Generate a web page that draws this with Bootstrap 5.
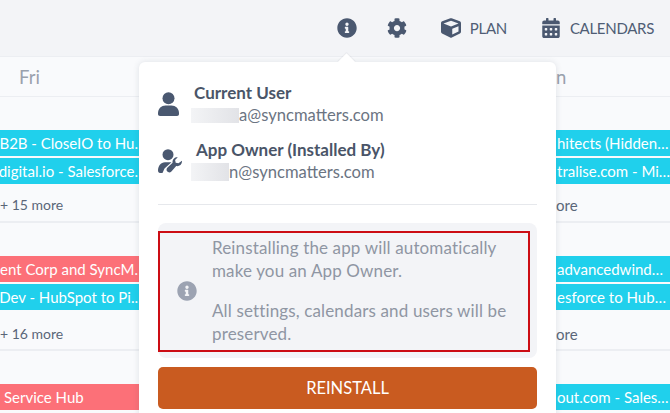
<!DOCTYPE html>
<html lang="en">
<head>
    <meta charset="UTF-8">
    <meta name="viewport" content="width=device-width, initial-scale=1.0">
    <title>Calendar</title>
    <link href="https://cdn.jsdelivr.net/npm/bootstrap@5.3.0/dist/css/bootstrap.min.css" rel="stylesheet">
    <style>
        html, body {
            height: 100%;
            overflow: hidden;
        }
        body {
            font-family: Lato, "Open Sans", sans-serif;
            background: #f9fafc;
            color: #4a5568;
            position: relative;
        }
        .top-bar {
            height: 57px;
            background: #f3f4f7;
            padding-right: 16px;
            border-bottom: 1px solid #eceef2;
        }
        .top-bar svg {
            fill: #4a5870;
            display: block;
        }
        .top-label {
            font-size: 15px;
            color: #4f5d75;
            letter-spacing: -.3px;
        }
        .cal-grid {
            display: grid;
            grid-template-columns: 139px 1fr 114px;
        }
        .head-cell {
            height: 40px;
            font-size: 18.5px;
            color: #99a1ad;
            border-bottom: 1px solid #eceef2;
            line-height: 40px;
        }
        .fri-cell {
            padding-left: 19px;
        }
        .week-cell {
            border-bottom: 2px solid #eceef2;
            overflow: hidden;
        }
        .week-a { height: 126px; padding-top: 33px; }
        .week-b { height: 128px; padding-top: 33px; }
        .week-c { height: 62px; padding-top: 33px; border-bottom: 0; }
        .cal-bar {
            height: 26px;
            margin-bottom: 2px;
            color: #fff;
            font-size: 15px;
            line-height: 26px;
            white-space: nowrap;
            overflow: hidden;
            display: flex;
            justify-content: flex-end;
            padding-right: 1px;
        }
        .bar-cyan { background: #20d0ec; }
        .bar-red { background: #fc7078; }
        .bar-left {
            justify-content: flex-start;
            padding-left: 1px;
        }
        .more-line {
            font-size: 15px;
            color: #5a6678;
            white-space: nowrap;
            line-height: 20px;
            margin-top: 11px;
        }
        .more-low {
            margin-top: 14px;
        }
        .more-small {
            font-size: 14px;
        }
        .info-pop {
            position: absolute;
            left: 139px;
            top: 62px;
            width: 417px;
            height: 370px;
            background: #fff;
            border-radius: 6px;
            box-shadow: 0 0 6px rgba(60, 70, 90, .14);
            padding: 19px;
        }
        .info-pop::before {
            content: "";
            position: absolute;
            left: 201px;
            top: -6px;
            width: 13px;
            height: 13px;
            background: #fff;
            transform: rotate(45deg);
            box-shadow: -1px -1px 1px rgba(60, 70, 90, .06);
        }
        .pop-head {
            font-size: 17px;
            font-weight: 700;
            color: #4a5568;
            line-height: 23px;
        }
        .pop-mail {
            font-size: 16.6px;
            color: #6b7482;
            line-height: 23px;
            display: flex;
        }
        .blur-patch {
            display: block;
            height: 15px;
            margin-top: 4px;
            background: linear-gradient(90deg, #f3f4f6, #e2e3e7);
        }
        .patch-one {
            width: 48px;
            margin-left: -3px;
        }
        .patch-two {
            width: 38px;
            height: 18px;
            margin-top: 2px;
            margin-left: -5px;
        }
        .pop-rule {
            border-top: 1px solid #e6e8ec;
            margin: 20px 0 18px;
        }
        .notice-box {
            background: #f3f4f7;
            border-radius: 8px;
            height: 135px;
            padding: 13px 19px;
            color: #8f96a3;
            font-size: 17px;
            line-height: 23px;
            letter-spacing: .14px;
        }
        .notice-box p {
            margin: 0 0 17px;
        }
        .red-outline {
            position: absolute;
            left: 19px;
            top: 169px;
            width: 372px;
            height: 121px;
            border: 2px solid #cc0d14;
        }
        .reinstall-btn {
            background: #c95b20;
            border: 0;
            border-radius: 5px;
            color: #fff;
            width: 100%;
            height: 42px;
            font-size: 16.5px;
            margin-top: 9px;
        }
        .reinstall-btn:hover {
            background: #b54f1a;
            color: #fff;
        }
        .gap-info { margin-right: 30px; }
        .gap-gear { margin-right: 34px; }
        .gap-icon { margin-right: 9px; }
        .gap-cal { margin-right: 10px; }
        .gap-plan { margin-right: 35px; }
        .gap-user { margin-right: 15px; }
        .gap-owner { margin-right: 14px; }
        .gap-notice { margin-right: 15px; }
        .owner-row { margin-top: 11px; }
    </style>
</head>
<body>
    <!-- Верхняя панель -->
    <div class="top-bar d-flex align-items-center justify-content-end">
        <svg class="gap-info" width="20" height="20" viewBox="0 0 512 512"><path d="M256 8C119.043 8 8 119.083 8 256c0 136.997 111.043 248 248 248s248-111.003 248-248C504 119.083 392.957 8 256 8zm0 110c23.196 0 42 18.804 42 42s-18.804 42-42 42-42-18.804-42-42 18.804-42 42-42zm56 254c0 6.627-5.373 12-12 12h-88c-6.627 0-12-5.373-12-12v-24c0-6.627 5.373-12 12-12h12v-64h-12c-6.627 0-12-5.373-12-12v-24c0-6.627 5.373-12 12-12h64c6.627 0 12 5.373 12 12v100h12c6.627 0 12 5.373 12 12v24z"/></svg>
        <svg class="gap-gear" width="20" height="20" viewBox="0 0 512 512"><path d="M487.4 315.7l-42.6-24.6c4.3-23.2 4.3-47 0-70.2l42.6-24.6c4.9-2.8 7.1-8.6 5.5-14-11.1-35.6-30-67.8-54.7-94.6-3.8-4.1-10-5.1-14.8-2.3L380.8 110c-17.9-15.4-38.5-27.3-60.8-35.1V25.8c0-5.6-3.9-10.5-9.4-11.7-36.7-8.2-74.3-7.8-109.2 0-5.5 1.2-9.4 6.1-9.4 11.7V75c-22.2 7.9-42.8 19.8-60.8 35.1L88.7 85.5c-4.9-2.8-11-1.9-14.8 2.3-24.7 26.7-43.6 58.9-54.7 94.6-1.7 5.4.6 11.2 5.5 14L67.3 221c-4.3 23.2-4.3 47 0 70.2l-42.6 24.6c-4.9 2.8-7.1 8.6-5.5 14 11.1 35.6 30 67.8 54.7 94.6 3.8 4.1 10 5.1 14.8 2.3l42.6-24.6c17.9 15.4 38.5 27.3 60.8 35.1v49.2c0 5.6 3.9 10.5 9.4 11.7 36.7 8.2 74.3 7.8 109.2 0 5.5-1.2 9.4-6.1 9.4-11.7v-49.2c22.2-7.9 42.8-19.8 60.8-35.1l42.6 24.6c4.9 2.8 11 1.9 14.8-2.3 24.7-26.7 43.6-58.9 54.7-94.6 1.5-5.5-.7-11.3-5.6-14.1zM256 336c-44.1 0-80-35.9-80-80s35.9-80 80-80 80 35.9 80 80-35.9 80-80 80z"/></svg>
        <svg class="gap-icon" width="20" height="20" viewBox="0 0 512 512"><path d="M239.1 6.3l-208 78c-18.7 7-31.1 25-31.1 45v225.1c0 18.2 10.3 34.8 26.5 42.9l208 104c13.5 6.8 29.4 6.8 42.9 0l208-104c16.3-8.1 26.5-24.8 26.5-42.9V129.3c0-20-12.4-37.9-31.1-44.9l-208-78C262 2.2 250 2.2 239.1 6.3zM256 68.4l192 72v1.1l-192 78-192-78v-1.1l192-72zm32 356V275.5l160-65v133.9l-160 80z"/></svg>
        <span class="top-label gap-plan">PLAN</span>
        <svg class="gap-cal" width="18" height="20" viewBox="0 0 448 512"><path d="M0 464c0 26.5 21.5 48 48 48h352c26.5 0 48-21.5 48-48V192H0v272zm320-196c0-6.6 5.4-12 12-12h40c6.6 0 12 5.4 12 12v40c0 6.6-5.4 12-12 12h-40c-6.6 0-12-5.4-12-12v-40zm0 128c0-6.6 5.4-12 12-12h40c6.6 0 12 5.4 12 12v40c0 6.6-5.4 12-12 12h-40c-6.6 0-12-5.4-12-12v-40zM192 268c0-6.6 5.4-12 12-12h40c6.6 0 12 5.4 12 12v40c0 6.6-5.4 12-12 12h-40c-6.6 0-12-5.4-12-12v-40zm0 128c0-6.6 5.4-12 12-12h40c6.6 0 12 5.4 12 12v40c0 6.6-5.4 12-12 12h-40c-6.6 0-12-5.4-12-12v-40zM64 268c0-6.6 5.4-12 12-12h40c6.6 0 12 5.4 12 12v40c0 6.6-5.4 12-12 12H76c-6.6 0-12-5.4-12-12v-40zm0 128c0-6.6 5.4-12 12-12h40c6.6 0 12 5.4 12 12v40c0 6.6-5.4 12-12 12H76c-6.6 0-12-5.4-12-12v-40zM400 64h-48V16c0-8.8-7.2-16-16-16h-32c-8.8 0-16 7.2-16 16v48H160V16c0-8.8-7.2-16-16-16h-32c-8.8 0-16 7.2-16 16v48H48C21.5 64 0 85.5 0 112v48h448v-48c0-26.5-21.5-48-48-48z"/></svg>
        <span class="top-label">CALENDARS</span>
    </div>

    <!-- Календарь -->
    <div class="cal-grid">
        <div class="head-cell fri-cell">Fri</div>
        <div class="head-cell"></div>
        <div class="head-cell">n</div>

        <div class="week-cell week-a">
            <div class="cal-bar bar-cyan">B2B - CloseIO to Hu.</div>
            <div class="cal-bar bar-cyan">digital.io - Salesforce.</div>
            <div class="more-line more-small">+ 15 more</div>
        </div>
        <div class="week-cell week-a"></div>
        <div class="week-cell week-a">
            <div class="cal-bar bar-cyan bar-left">hitects (Hidden…</div>
            <div class="cal-bar bar-cyan bar-left">tralise.com - Mi…</div>
            <div class="more-line">ore</div>
        </div>

        <div class="week-cell week-b">
            <div class="cal-bar bar-red">ent Corp and SyncM.</div>
            <div class="cal-bar bar-cyan">Dev - HubSpot to Pi..</div>
            <div class="more-line more-low more-small">+ 16 more</div>
        </div>
        <div class="week-cell week-b"></div>
        <div class="week-cell week-b">
            <div class="cal-bar bar-cyan bar-left">advancedwind…</div>
            <div class="cal-bar bar-cyan bar-left">esforce to Hub…</div>
            <div class="more-line more-low">ore</div>
        </div>

        <div class="week-cell week-c">
            <div class="cal-bar bar-red bar-left ps-1">Service Hub</div>
        </div>
        <div class="week-cell week-c"></div>
        <div class="week-cell week-c">
            <div class="cal-bar bar-cyan bar-left">out.com - Sales…</div>
        </div>
    </div>

    <!-- Всплывающее окно -->
    <div class="info-pop">
        <div class="d-flex align-items-center">
            <svg class="gap-user" width="21" height="24" viewBox="0 0 21 24" fill="#4a5870">
                <circle cx="10.5" cy="6.2" r="6"/>
                <path d="M0 22v-1c0-4.5 3.5-7.5 7.500-7.500h6c4 0 7.500 3 7.500 7.500v1c0 1.200-.8 2-2 2H2c-1.200 0-2-.8-2-2z"/>
            </svg>
            <div>
                <div class="pop-head">Current User</div>
                <div class="pop-mail"><span class="blur-patch patch-one"></span>a@syncmatters.com</div>
            </div>
        </div>
        <div class="d-flex align-items-center owner-row">
            <svg class="gap-owner" width="24" height="24" viewBox="0 0 24 24" fill="#4a5870">
                <circle cx="10" cy="5.700" r="5.500"/>
                <path d="M0 21.500c0-4.500 2.700-8 7-8.300h6.500L6.500 19.500 4.500 24H2c-1.200 0-2-1-2-2.500z"/>
                <path d="M24 11.800c.3 3.400-2.600 6-5.800 5.300l-4.800 5.300c-1.200 1.300-3 1.300-4.100.2-1.100-1.100-1-2.900.2-4l5.100-4.800c-.6-3.200 2-6 5.200-5.600l-2.700 2.900.6 2.700 2.700.5z"/>
            </svg>
            <div>
                <div class="pop-head">App Owner (Installed By)</div>
                <div class="pop-mail"><span class="blur-patch patch-two"></span>n@syncmatters.com</div>
            </div>
        </div>
        <div class="pop-rule"></div>
        <div class="notice-box d-flex align-items-center">
            <svg class="gap-notice flex-shrink-0" width="20" height="20" viewBox="0 0 512 512" fill="#9ca3b2"><path d="M256 8C119.043 8 8 119.083 8 256c0 136.997 111.043 248 248 248s248-111.003 248-248C504 119.083 392.957 8 256 8zm0 110c23.196 0 42 18.804 42 42s-18.804 42-42 42-42-18.804-42-42 18.804-42 42-42zm56 254c0 6.627-5.373 12-12 12h-88c-6.627 0-12-5.373-12-12v-24c0-6.627 5.373-12 12-12h12v-64h-12c-6.627 0-12-5.373-12-12v-24c0-6.627 5.373-12 12-12h64c6.627 0 12 5.373 12 12v100h12c6.627 0 12 5.373 12 12v24z"/></svg>
            <div>
                <p>Reinstalling the app will automatically make you an App Owner.</p>
                <p class="mb-0">All settings, calendars and users will be preserved.</p>
            </div>
        </div>
        <div class="red-outline"></div>
        <button type="button" class="btn reinstall-btn">REINSTALL</button>
    </div>

    <script src="https://cdn.jsdelivr.net/npm/bootstrap@5.3.0/dist/js/bootstrap.bundle.min.js"></script>
</body>
</html>
